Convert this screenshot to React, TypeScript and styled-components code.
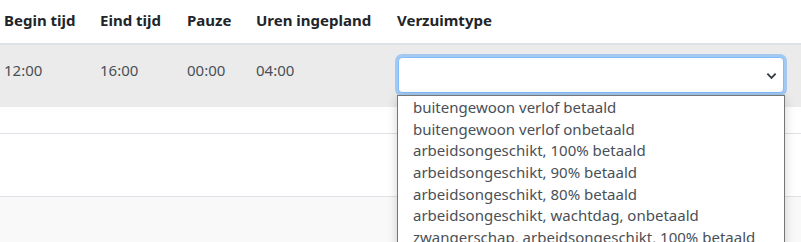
import { createGlobalStyle, styled } from "styled-components";

const GlobalStyle = createGlobalStyle`
  html, body {
    margin: 0;
    padding: 0;
    background: #ffffff;
    font-family: "Noto Sans", "Open Sans", sans-serif;
  }
`;

const columns = "96px 87px 69px 141px 1fr";

const options = [
  "buitengewoon verlof betaald",
  "buitengewoon verlof onbetaald",
  "arbeidsongeschikt, 100% betaald",
  "arbeidsongeschikt, 90% betaald",
  "arbeidsongeschikt, 80% betaald",
  "arbeidsongeschikt, wachtdag, onbetaald",
  "zwangerschap, arbeidsongeschikt, 100% betaald",
];

const App = () => {
  return (
    <>
      <GlobalStyle />
      <Table>
        <HeadRow>
          <HeadCell>Begin tijd</HeadCell>
          <HeadCell>Eind tijd</HeadCell>
          <HeadCell>Pauze</HeadCell>
          <HeadCell>Uren ingepland</HeadCell>
          <HeadCell>Verzuimtype</HeadCell>
        </HeadRow>
        <DataRow $bg="#ebebeb">
          <Cell>12:00</Cell>
          <Cell>16:00</Cell>
          <Cell>00:00</Cell>
          <Cell>04:00</Cell>
          <SelectCell>
            <SelectBox>
              <Chevron viewBox="0 0 12 8">
                <path d="M1.5 1.5 L6 6 L10.5 1.5" fill="none" stroke="#343a40" strokeWidth="2" />
              </Chevron>
            </SelectBox>
            <OptionList>
              {options.map((o) => (
                <Option key={o}>{o}</Option>
              ))}
            </OptionList>
          </SelectCell>
        </DataRow>
        <SpacerRow />
        <DataRow $bg="#ffffff" />
        <DataRow $bg="#f9f9f9" />
      </Table>
    </>
  );
};

export default App;

const Table = styled.div`
  width: 801px;
  height: 242px;
  overflow: hidden;
`;

const HeadRow = styled.div`
  display: grid;
  grid-template-columns: ${columns};
  height: 43px;
  border-bottom: 2px solid #dee2e6;
`;

const HeadCell = styled.div`
  padding: 9px 0 0 4px;
  font-size: 15px;
  line-height: 22px;
  font-weight: 700;
  color: #212529;
`;

const DataRow = styled.div<{ $bg: string }>`
  display: grid;
  grid-template-columns: ${columns};
  height: 62px;
  background: ${(p) => p.$bg};
  border-bottom: 1px solid #dee2e6;
  &:nth-child(2) {
    border-bottom: none;
  }
`;

const SpacerRow = styled.div`
  height: 26px;
  background: #ffffff;
  border-bottom: 1px solid #dee2e6;
`;

const Cell = styled.div`
  padding: 14px 0 0 4px;
  font-size: 15px;
  line-height: 22px;
  color: #495057;
`;

const SelectCell = styled.div`
  position: relative;
  padding: 12px 0 0 5px;
`;

const SelectBox = styled.div`
  width: 386px;
  height: 36px;
  box-sizing: border-box;
  background: #ffffff;
  border: 1px solid #80bdff;
  border-radius: 4px;
  box-shadow: 0 0 0 3px rgba(0, 123, 255, 0.3);
  display: flex;
  align-items: center;
  justify-content: flex-end;
  padding-right: 6px;
`;

const Chevron = styled.svg`
  width: 11px;
  height: 8px;
  margin-top: 2px;
`;

const OptionList = styled.ul`
  position: absolute;
  left: 4px;
  top: 50px;
  width: 388px;
  box-sizing: border-box;
  margin: 0;
  padding: 1px 0 0;
  list-style: none;
  background: #ffffff;
  border: 1px solid #767676;
  box-shadow: 0 2px 10px rgba(0, 0, 0, 0.18);
`;

const Option = styled.li`
  height: 21.7px;
  line-height: 21.7px;
  padding-left: 15px;
  font-size: 15px;
  color: #495057;
  white-space: nowrap;
`;
